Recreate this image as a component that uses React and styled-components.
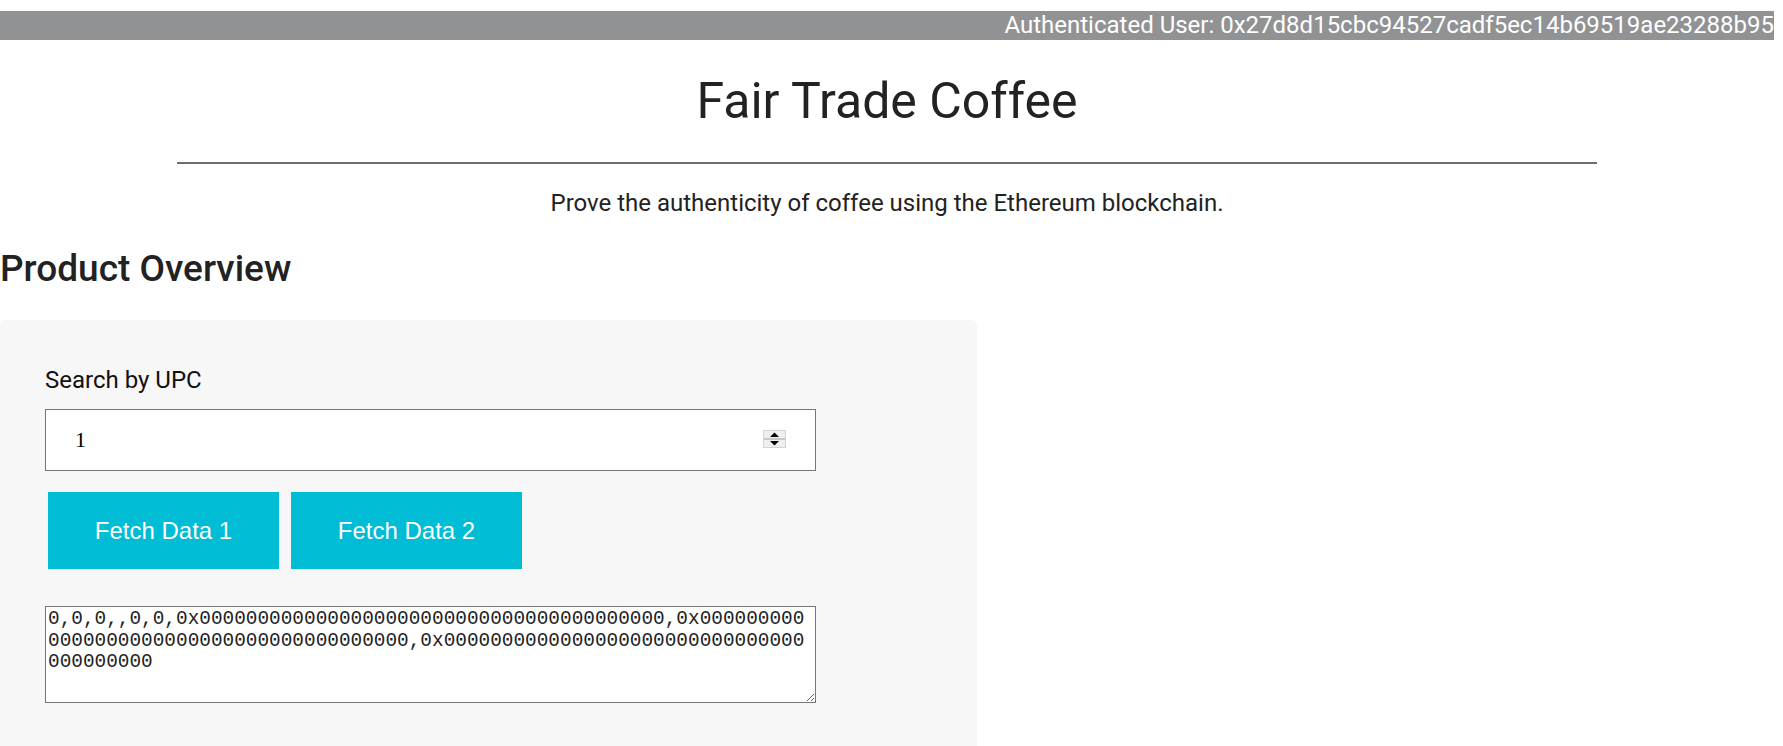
import React from "react";
import styled, { createGlobalStyle } from "styled-components";

const GlobalStyle = createGlobalStyle`
  body {
    margin: 0;
    background: #fff;
    color: #222;
    font-family: Roboto, "Liberation Sans", sans-serif;
  }
`;

const Page = styled.div`
  margin-right: 9px;
`;

const TopBar = styled.header`
  margin-top: 11px;
  height: 29px;
  background: #919293;
  color: #fff;
  font-size: 24px;
  line-height: 29px;
  text-align: right;
  white-space: nowrap;
`;

const Title = styled.h1`
  margin: 34px 0 0;
  font-size: 50px;
  font-weight: 400;
  line-height: 54px;
  text-align: center;
`;

const Divider = styled.hr`
  width: 80%;
  height: 0;
  margin: 34px auto 0;
  border: 0;
  border-top: 2px solid #6e6e6e;
`;

const Tagline = styled.p`
  margin: 26px 0 0;
  font-size: 24px;
  line-height: 26px;
  text-align: center;
`;

const SectionTitle = styled.h2`
  margin: 33px 0 0;
  font-size: 37px;
  font-weight: 500;
  line-height: 40px;
`;

const Panel = styled.section`
  box-sizing: border-box;
  width: 977px;
  margin-top: 31px;
  padding: 47px 45px 80px;
  background: #f7f7f7;
  border-radius: 6px;
`;

const Label = styled.label`
  display: block;
  font-size: 24px;
  line-height: 26px;
  color: #111;
`;

const InputWrap = styled.div`
  position: relative;
  width: 771px;
  margin-top: 16px;
`;

const NumberInput = styled.input`
  display: block;
  box-sizing: border-box;
  width: 100%;
  height: 62px;
  padding: 0 0 0 29px;
  border: 1px solid #767676;
  background: #fff;
  font-family: "Liberation Serif", serif;
  font-size: 22px;
  color: #000;
  outline: none;
  -moz-appearance: textfield;

  &::-webkit-inner-spin-button,
  &::-webkit-outer-spin-button {
    -webkit-appearance: none;
    margin: 0;
  }
`;

const Spinner = styled.svg`
  position: absolute;
  right: 30px;
  top: 21px;
  pointer-events: none;
`;

const ButtonRow = styled.div`
  display: flex;
  gap: 12px;
  margin: 21px 0 0 3px;
`;

const FetchButton = styled.button`
  width: 231px;
  height: 77px;
  border: none;
  background: #00bcd4;
  color: #fff;
  font-family: "Liberation Sans", Arial, sans-serif;
  font-size: 24px;
  cursor: pointer;
`;

const Output = styled.textarea`
  display: block;
  box-sizing: border-box;
  width: 771px;
  height: 97px;
  margin-top: 37px;
  padding: 2px;
  border: 1px solid #767676;
  background: #fff;
  color: #222;
  font-family: "Liberation Mono", "Courier New", monospace;
  font-size: 19.4px;
  line-height: 21.7px;
  outline: none;
`;

const zeros = "0".repeat(40);
const itemData = `0,0,0,,0,0,0x${zeros},0x${zeros},0x${zeros}`;

const SpinIcon = () => (
  <Spinner width="23" height="18" viewBox="0 0 23 18">
    <rect x="0.5" y="0.5" width="22" height="17" fill="#efefef" stroke="#d4d4d4" />
    <rect x="1" y="8" width="21" height="2" fill="#c8c8c8" />
    <polygon points="11.5,2.5 16,7 7,7" fill="#000" />
    <polygon points="7,11 16,11 11.5,15.5" fill="#000" />
  </Spinner>
);

const App = () => (
  <Page>
    <GlobalStyle />
    <TopBar>Authenticated User: 0x27d8d15cbc94527cadf5ec14b69519ae23288b95</TopBar>
    <Title>Fair Trade Coffee</Title>
    <Divider />
    <Tagline>Prove the authenticity of coffee using the Ethereum blockchain.</Tagline>
    <SectionTitle>Product Overview</SectionTitle>
    <Panel>
      <Label htmlFor="upc">Search by UPC</Label>
      <InputWrap>
        <NumberInput id="upc" type="number" defaultValue={1} />
        <SpinIcon />
      </InputWrap>
      <ButtonRow>
        <FetchButton>Fetch Data 1</FetchButton>
        <FetchButton>Fetch Data 2</FetchButton>
      </ButtonRow>
      <Output readOnly value={itemData} />
    </Panel>
  </Page>
);

export default App;
